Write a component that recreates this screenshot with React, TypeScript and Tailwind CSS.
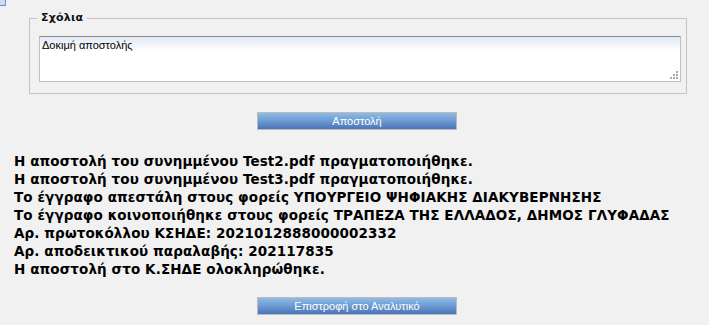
import React from "react";

function Button({ label }: { label: string }) {
  return (
    <div className="flex justify-center pl-[5px]">
      <button className="w-[200px] h-[18px] border border-[#bcbcbc] bg-[linear-gradient(to_bottom,#8fbbe6,#6d9ad2_50%,#4a74b6)] text-white text-[11px] leading-[16px] font-['Liberation_Sans',Arial,sans-serif]">
        {label}
      </button>
    </div>
  );
}

export default function App() {
  const lines = [
    "Η αποστολή του συνημμένου Test2.pdf πραγματοποιήθηκε.",
    "Η αποστολή του συνημμένου Test3.pdf πραγματοποιήθηκε.",
    "Το έγγραφο απεστάλη στους φορείς ΥΠΟΥΡΓΕΙΟ ΨΗΦΙΑΚΗΣ ΔΙΑΚΥΒΕΡΝΗΣΗΣ",
    "Το έγγραφο κοινοποιήθηκε στους φορείς ΤΡΑΠΕΖΑ ΤΗΣ ΕΛΛΑΔΟΣ, ΔΗΜΟΣ ΓΛΥΦΑΔΑΣ",
    "Αρ. πρωτοκόλλου ΚΣΗΔΕ: 2021012888000002332",
    "Αρ. αποδεικτικού παραλαβής: 202117835",
    "Η αποστολή στο Κ.ΣΗΔΕ ολοκληρώθηκε.",
  ];
  return (
    <div className="relative w-[709px] h-[325px] bg-[#f1f1f1] overflow-hidden font-['Liberation_Sans',Arial,sans-serif]">
      <div className="absolute left-0 top-0 w-[6px] h-[6px] bg-[#c9dcf3] border-r border-b border-[#6f8fc4]" />
      <div className="pt-[12px]">
        <fieldset className="ml-[29px] w-[658px] border border-[#c4c4c4] pl-[9px] pb-[11px]">
          <legend className="-ml-[2px] px-[4px] text-[11px] leading-[12px] font-bold text-[#111] font-['DejaVu_Sans',Verdana,sans-serif] tracking-[0.2px]">
            Σχόλια
          </legend>
          <div className="relative mt-[12px] w-[642px] h-[46px] border border-[#c0c0c0] border-t-[#8a8a8a] bg-[linear-gradient(to_bottom,#e2eaf4,#ffffff_14px)] px-[2px] pt-[2px] text-[11px] leading-[13px] text-black">
            Δοκιμή αποστολής
            <svg className="absolute right-[2px] bottom-[2px]" width="8" height="8" viewBox="0 0 8 8">
              <rect x="6" y="0" width="2" height="2" fill="#a8a8a8" />
              <rect x="3" y="3" width="2" height="2" fill="#a8a8a8" />
              <rect x="6" y="3" width="2" height="2" fill="#a8a8a8" />
              <rect x="0" y="6" width="2" height="2" fill="#a8a8a8" />
              <rect x="3" y="6" width="2" height="2" fill="#a8a8a8" />
              <rect x="6" y="6" width="2" height="2" fill="#a8a8a8" />
            </svg>
          </div>
        </fieldset>
      </div>
      <div className="mt-[18px]">
        <Button label="Αποστολή" />
      </div>
      <div className="mt-[22px] pl-[14px] text-[13.5px] leading-[18px] font-bold text-black font-['DejaVu_Sans',Verdana,sans-serif] tracking-[0.1px]">
        {lines.map((l) => (
          <div key={l} className="whitespace-nowrap">{l}</div>
        ))}
      </div>
      <div className="mt-[19px]">
        <Button label="Επιστροφή στο Αναλυτικό" />
      </div>
    </div>
  );
}
